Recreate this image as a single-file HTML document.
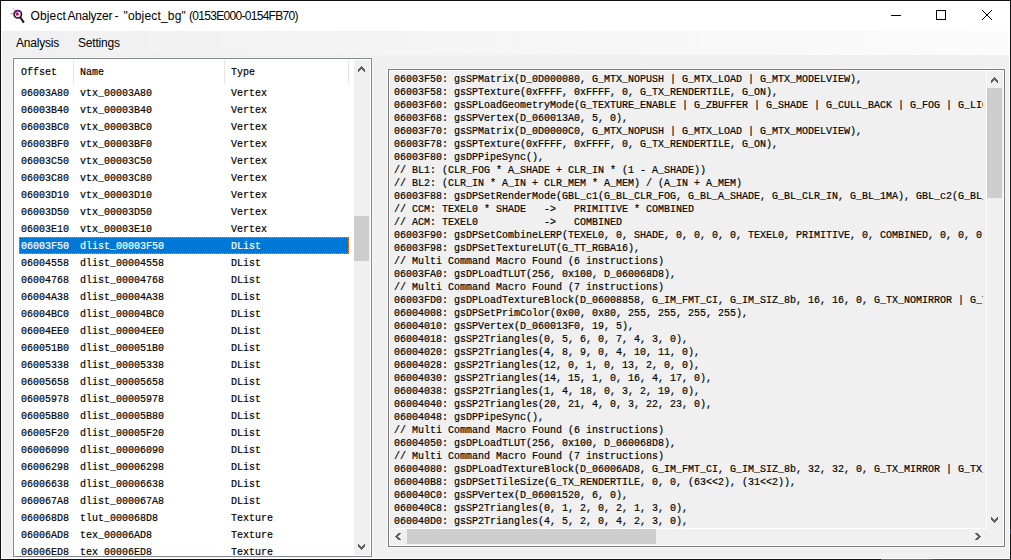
<!DOCTYPE html>
<html><head><meta charset="utf-8">
<style>
html,body{margin:0;padding:0;}
body{width:1011px;height:560px;overflow:hidden;position:relative;background:#f0f0f0;font-family:"Liberation Sans",sans-serif;}
.a{position:absolute;box-sizing:border-box;}
#frame{left:0;top:0;width:1011px;height:560px;border:1px solid #111;}
#inner{left:1px;top:1px;width:1009px;height:558px;border:1px solid #fff;border-top:0;}
#title{left:1px;top:1px;width:1009px;height:30px;background:#fff;}
.tt{top:9px;font-size:12px;color:#000;white-space:nowrap;line-height:15px;}
#menu{left:2px;top:31px;width:1007px;height:24px;background:linear-gradient(to right,#f0f0f0,#fbfbfb);}
.mi{top:36px;font-size:12px;line-height:15px;color:#000;letter-spacing:-0.2px;}
/* listbox */
#lb_ring{left:12px;top:57px;width:361px;height:501px;border:1px solid #f7f7f7;}
#lb{left:13px;top:58px;width:359px;height:499px;border:1px solid #828790;background:#fff;overflow:hidden;}
.mono{font-family:"Liberation Mono",monospace;font-size:10px;-webkit-text-stroke:0.18px #000;}
.hdr{top:66px;line-height:13px;color:#000;}
.hsep{top:60px;width:1px;height:24px;background:#e5e5e5;}
.row{position:absolute;left:19px;width:330px;height:17px;}
.row span{position:absolute;top:3px;line-height:13px;white-space:nowrap;font-family:"Liberation Mono",monospace;font-size:10px;color:#000;-webkit-text-stroke:0.18px #000;}
.c1{left:2px;}.c2{left:61px;}.c3{left:212px;}
.row.sel{background:#0078d7;}
.row.sel span{color:#fff;-webkit-text-stroke:0.18px #fff;}
.fh{position:absolute;height:1px;background:repeating-linear-gradient(to right,#ff8728 0 1px,transparent 1px 2px);}
.fv{position:absolute;width:1px;background:repeating-linear-gradient(to bottom,#ff8728 0 1px,transparent 1px 2px);}
.sbt{background:#f0f0f0;}
.thumb{background:#cdcdcd;}
/* text panel */
#tp_ring{left:387px;top:68px;width:619px;height:480px;border:1px solid #f7f7f7;}
#tp{left:388px;top:69px;width:617px;height:478px;border:1px solid #7a7a7a;background:#fff;}
#tpi{left:390px;top:71px;width:613px;height:474px;background:#f0f0f0;}
#tv{left:390px;top:71px;width:593px;height:457px;overflow:hidden;}
.ln{position:absolute;left:4px;white-space:pre;font-family:"Liberation Mono",monospace;font-size:10px;line-height:13px;color:#000;-webkit-text-stroke:0.18px #000;}
</style></head><body>
<div id="frame" class="a"></div>
<div id="inner" class="a"></div>
<div id="title" class="a"></div>
<svg class="a" style="left:6px;top:4px" width="24" height="24" viewBox="0 0 24 24">
  <path d="M7.2 4.4 L8.6 6.6 M4.4 9.6 L7.2 9.6" stroke="#a8a8a8" stroke-width="1" fill="none"/>
  <circle cx="11.8" cy="10.3" r="3.7" fill="#efefef" stroke="#2a0838" stroke-width="1.6"/>
  <path d="M9.6 7.2 A3.7 3.7 0 0 1 15.2 9.2" stroke="#6a2a8a" stroke-width="1.2" fill="none"/>
  <ellipse cx="11.2" cy="10.0" rx="1.6" ry="1.8" fill="#c80a5a"/>
  <path d="M14.2 13.3 L17.9 18.6" stroke="#140814" stroke-width="1.9" fill="none"/>
</svg>
<div class="a tt" style="left:30.5px;letter-spacing:0.15px">Object</div>
<div class="a tt" style="left:67.5px;letter-spacing:-0.24px">Analyzer</div>
<div class="a tt" style="left:114.5px">-</div>
<div class="a tt" style="left:123.5px;letter-spacing:0.17px">"object_bg"</div>
<div class="a tt" style="left:189px;letter-spacing:-0.7px">(0153E000-0154FB70)</div>
<svg class="a" style="left:880px;top:0" width="130" height="31" shape-rendering="crispEdges">
  <rect x="11" y="15" width="10" height="1" fill="#000"/>
  <path d="M56 10h10v10h-10z M57 11v8h8v-8z" fill="#000" fill-rule="evenodd"/>
  <g fill="#000"><rect x="105" y="13" width="1" height="1"/><rect x="104" y="17" width="1" height="1"/><rect x="105" y="16" width="1" height="1"/><rect x="111" y="10" width="1" height="1"/><rect x="110" y="18" width="1" height="1"/><rect x="111" y="19" width="1" height="1"/><rect x="103" y="18" width="1" height="1"/><rect x="106" y="14" width="1" height="1"/><rect x="107" y="15" width="1" height="1"/><rect x="110" y="11" width="1" height="1"/><rect x="102" y="10" width="1" height="1"/><rect x="103" y="11" width="1" height="1"/><rect x="102" y="19" width="1" height="1"/><rect x="108" y="13" width="1" height="1"/><rect x="109" y="12" width="1" height="1"/><rect x="108" y="16" width="1" height="1"/><rect x="104" y="12" width="1" height="1"/><rect x="107" y="14" width="1" height="1"/><rect x="106" y="15" width="1" height="1"/><rect x="109" y="17" width="1" height="1"/></g>
</svg>
<div id="menu" class="a"></div>
<div class="a mi" style="left:16px">Analysis</div>
<div class="a mi" style="left:78px">Settings</div>

<div id="lb_ring" class="a"></div>
<div id="lb" class="a"></div>
<div class="a mono hdr" style="left:21px">Offset</div>
<div class="a mono hdr" style="left:80px">Name</div>
<div class="a mono hdr" style="left:231px">Type</div>
<div class="a hsep" style="left:73px"></div>
<div class="a hsep" style="left:224px"></div>
<div class="a hsep" style="left:348px"></div>
<div class="a" style="left:14px;top:84px;width:339px;height:471px;overflow:hidden;">
<div style="position:absolute;left:-14px;top:-84px;width:400px;height:600px;">
<div class="row" style="top:84px"><span class="c1">06003A80</span><span class="c2">vtx_00003A80</span><span class="c3">Vertex</span></div>
<div class="row" style="top:101px"><span class="c1">06003B40</span><span class="c2">vtx_00003B40</span><span class="c3">Vertex</span></div>
<div class="row" style="top:118px"><span class="c1">06003BC0</span><span class="c2">vtx_00003BC0</span><span class="c3">Vertex</span></div>
<div class="row" style="top:135px"><span class="c1">06003BF0</span><span class="c2">vtx_00003BF0</span><span class="c3">Vertex</span></div>
<div class="row" style="top:152px"><span class="c1">06003C50</span><span class="c2">vtx_00003C50</span><span class="c3">Vertex</span></div>
<div class="row" style="top:169px"><span class="c1">06003C80</span><span class="c2">vtx_00003C80</span><span class="c3">Vertex</span></div>
<div class="row" style="top:186px"><span class="c1">06003D10</span><span class="c2">vtx_00003D10</span><span class="c3">Vertex</span></div>
<div class="row" style="top:203px"><span class="c1">06003D50</span><span class="c2">vtx_00003D50</span><span class="c3">Vertex</span></div>
<div class="row" style="top:220px"><span class="c1">06003E10</span><span class="c2">vtx_00003E10</span><span class="c3">Vertex</span></div>
<div class="row sel" style="top:237px"><span class="c1">06003F50</span><span class="c2">dlist_00003F50</span><span class="c3">DList</span></div>
<div class="row" style="top:254px"><span class="c1">06004558</span><span class="c2">dlist_00004558</span><span class="c3">DList</span></div>
<div class="row" style="top:271px"><span class="c1">06004768</span><span class="c2">dlist_00004768</span><span class="c3">DList</span></div>
<div class="row" style="top:288px"><span class="c1">06004A38</span><span class="c2">dlist_00004A38</span><span class="c3">DList</span></div>
<div class="row" style="top:305px"><span class="c1">06004BC0</span><span class="c2">dlist_00004BC0</span><span class="c3">DList</span></div>
<div class="row" style="top:322px"><span class="c1">06004EE0</span><span class="c2">dlist_00004EE0</span><span class="c3">DList</span></div>
<div class="row" style="top:339px"><span class="c1">060051B0</span><span class="c2">dlist_000051B0</span><span class="c3">DList</span></div>
<div class="row" style="top:356px"><span class="c1">06005338</span><span class="c2">dlist_00005338</span><span class="c3">DList</span></div>
<div class="row" style="top:373px"><span class="c1">06005658</span><span class="c2">dlist_00005658</span><span class="c3">DList</span></div>
<div class="row" style="top:390px"><span class="c1">06005978</span><span class="c2">dlist_00005978</span><span class="c3">DList</span></div>
<div class="row" style="top:407px"><span class="c1">06005B80</span><span class="c2">dlist_00005B80</span><span class="c3">DList</span></div>
<div class="row" style="top:424px"><span class="c1">06005F20</span><span class="c2">dlist_00005F20</span><span class="c3">DList</span></div>
<div class="row" style="top:441px"><span class="c1">06006090</span><span class="c2">dlist_00006090</span><span class="c3">DList</span></div>
<div class="row" style="top:458px"><span class="c1">06006298</span><span class="c2">dlist_00006298</span><span class="c3">DList</span></div>
<div class="row" style="top:475px"><span class="c1">06006638</span><span class="c2">dlist_00006638</span><span class="c3">DList</span></div>
<div class="row" style="top:492px"><span class="c1">060067A8</span><span class="c2">dlist_000067A8</span><span class="c3">DList</span></div>
<div class="row" style="top:509px"><span class="c1">060068D8</span><span class="c2">tlut_000068D8</span><span class="c3">Texture</span></div>
<div class="row" style="top:526px"><span class="c1">06006AD8</span><span class="c2">tex_00006AD8</span><span class="c3">Texture</span></div>
<div class="row" style="top:543px"><span class="c1">06006ED8</span><span class="c2">tex_00006ED8</span><span class="c3">Texture</span></div>
</div></div>
<div class="fh" style="left:19px;top:237px;width:330px;"></div>
<div class="fh" style="left:19px;top:253px;width:330px;"></div>
<div class="fv" style="left:19px;top:237px;height:17px;"></div>
<div class="fv" style="left:348px;top:238px;height:15px;"></div>
<div class="a sbt" style="left:354px;top:60px;width:16px;height:495px;"></div>
<div class="a thumb" style="left:354px;top:216px;width:15px;height:45px;"></div>

<div id="tp_ring" class="a"></div>
<div id="tp" class="a"></div>
<div class="a" style="left:390px;top:71px;width:613px;height:474px;background:#f0f0f0;"></div>
<div id="tv" class="a">
<div class="ln" style="top:2px">06003F50: gsSPMatrix(D_0D000080, G_MTX_NOPUSH | G_MTX_LOAD | G_MTX_MODELVIEW),</div>
<div class="ln" style="top:15px">06003F58: gsSPTexture(0xFFFF, 0xFFFF, 0, G_TX_RENDERTILE, G_ON),</div>
<div class="ln" style="top:28px">06003F60: gsSPLoadGeometryMode(G_TEXTURE_ENABLE | G_ZBUFFER | G_SHADE | G_CULL_BACK | G_FOG | G_LIGHTING | G_SHADING_SMOOTH),</div>
<div class="ln" style="top:41px">06003F68: gsSPVertex(D_060013A0, 5, 0),</div>
<div class="ln" style="top:54px">06003F70: gsSPMatrix(D_0D0000C0, G_MTX_NOPUSH | G_MTX_LOAD | G_MTX_MODELVIEW),</div>
<div class="ln" style="top:67px">06003F78: gsSPTexture(0xFFFF, 0xFFFF, 0, G_TX_RENDERTILE, G_ON),</div>
<div class="ln" style="top:80px">06003F80: gsDPPipeSync(),</div>
<div class="ln" style="top:93px">// BL1: (CLR_FOG * A_SHADE + CLR_IN * (1 - A_SHADE))</div>
<div class="ln" style="top:106px">// BL2: (CLR_IN * A_IN + CLR_MEM * A_MEM) / (A_IN + A_MEM)</div>
<div class="ln" style="top:119px">06003F88: gsDPSetRenderMode(GBL_c1(G_BL_CLR_FOG, G_BL_A_SHADE, G_BL_CLR_IN, G_BL_1MA), GBL_c2(G_BL_CLR_IN, G_BL_A_IN, G_BL_CLR_MEM, G_BL_A_MEM)),</div>
<div class="ln" style="top:132px">// CCM: TEXEL0 * SHADE   -&gt;   PRIMITIVE * COMBINED</div>
<div class="ln" style="top:145px">// ACM: TEXEL0           -&gt;   COMBINED</div>
<div class="ln" style="top:158px">06003F90: gsDPSetCombineLERP(TEXEL0, 0, SHADE, 0, 0, 0, 0, TEXEL0, PRIMITIVE, 0, COMBINED, 0, 0, 0, 0, COMBINED),</div>
<div class="ln" style="top:171px">06003F98: gsDPSetTextureLUT(G_TT_RGBA16),</div>
<div class="ln" style="top:184px">// Multi Command Macro Found (6 instructions)</div>
<div class="ln" style="top:197px">06003FA0: gsDPLoadTLUT(256, 0x100, D_060068D8),</div>
<div class="ln" style="top:210px">// Multi Command Macro Found (7 instructions)</div>
<div class="ln" style="top:223px">06003FD0: gsDPLoadTextureBlock(D_06008858, G_IM_FMT_CI, G_IM_SIZ_8b, 16, 16, 0, G_TX_NOMIRROR | G_TX_WRAP, G_TX_NOMIRROR | G_TX_WRAP, 4, 4),</div>
<div class="ln" style="top:236px">06004008: gsDPSetPrimColor(0x00, 0x80, 255, 255, 255, 255),</div>
<div class="ln" style="top:249px">06004010: gsSPVertex(D_060013F0, 19, 5),</div>
<div class="ln" style="top:262px">06004018: gsSP2Triangles(0, 5, 6, 0, 7, 4, 3, 0),</div>
<div class="ln" style="top:275px">06004020: gsSP2Triangles(4, 8, 9, 0, 4, 10, 11, 0),</div>
<div class="ln" style="top:288px">06004028: gsSP2Triangles(12, 0, 1, 0, 13, 2, 0, 0),</div>
<div class="ln" style="top:301px">06004030: gsSP2Triangles(14, 15, 1, 0, 16, 4, 17, 0),</div>
<div class="ln" style="top:314px">06004038: gsSP2Triangles(1, 4, 18, 0, 3, 2, 19, 0),</div>
<div class="ln" style="top:327px">06004040: gsSP2Triangles(20, 21, 4, 0, 3, 22, 23, 0),</div>
<div class="ln" style="top:340px">06004048: gsDPPipeSync(),</div>
<div class="ln" style="top:353px">// Multi Command Macro Found (6 instructions)</div>
<div class="ln" style="top:366px">06004050: gsDPLoadTLUT(256, 0x100, D_060068D8),</div>
<div class="ln" style="top:379px">// Multi Command Macro Found (7 instructions)</div>
<div class="ln" style="top:392px">06004080: gsDPLoadTextureBlock(D_06006AD8, G_IM_FMT_CI, G_IM_SIZ_8b, 32, 32, 0, G_TX_MIRROR | G_TX_WRAP, G_TX_MIRROR | G_TX_WRAP, 5, 5),</div>
<div class="ln" style="top:405px">060040B8: gsDPSetTileSize(G_TX_RENDERTILE, 0, 0, (63&lt;&lt;2), (31&lt;&lt;2)),</div>
<div class="ln" style="top:418px">060040C0: gsSPVertex(D_06001520, 6, 0),</div>
<div class="ln" style="top:431px">060040C8: gsSP2Triangles(0, 1, 2, 0, 2, 1, 3, 0),</div>
<div class="ln" style="top:444px">060040D0: gsSP2Triangles(4, 5, 2, 0, 4, 2, 3, 0),</div>
</div>
<div class="a" style="left:986px;top:71px;width:1px;height:458px;background:#fff;"></div>
<div class="a" style="left:390px;top:528px;width:597px;height:1px;background:#fff;"></div>
<div class="a thumb" style="left:987px;top:88px;width:15px;height:110px;"></div>
<div class="a thumb" style="left:407px;top:529px;width:249px;height:15px;"></div>
<svg class="a" style="left:358px;top:66px" width="7" height="6" shape-rendering="crispEdges" fill="#606060"><rect x="3" y="0" width="1" height="1"/><rect x="2" y="1" width="1" height="1"/><rect x="3" y="1" width="1" height="1"/><rect x="4" y="1" width="1" height="1"/><rect x="1" y="2" width="1" height="1"/><rect x="2" y="2" width="1" height="1"/><rect x="3" y="2" width="1" height="1"/><rect x="4" y="2" width="1" height="1"/><rect x="5" y="2" width="1" height="1"/><rect x="0" y="3" width="1" height="1"/><rect x="1" y="3" width="1" height="1"/><rect x="2" y="3" width="1" height="1"/><rect x="4" y="3" width="1" height="1"/><rect x="5" y="3" width="1" height="1"/><rect x="6" y="3" width="1" height="1"/><rect x="0" y="4" width="1" height="1"/><rect x="1" y="4" width="1" height="1"/><rect x="5" y="4" width="1" height="1"/><rect x="6" y="4" width="1" height="1"/><rect x="0" y="5" width="1" height="1"/><rect x="6" y="5" width="1" height="1"/></svg>
<svg class="a" style="left:358px;top:544px" width="7" height="6" shape-rendering="crispEdges" fill="#606060"><rect x="3" y="5" width="1" height="1"/><rect x="2" y="4" width="1" height="1"/><rect x="3" y="4" width="1" height="1"/><rect x="4" y="4" width="1" height="1"/><rect x="1" y="3" width="1" height="1"/><rect x="2" y="3" width="1" height="1"/><rect x="3" y="3" width="1" height="1"/><rect x="4" y="3" width="1" height="1"/><rect x="5" y="3" width="1" height="1"/><rect x="0" y="2" width="1" height="1"/><rect x="1" y="2" width="1" height="1"/><rect x="2" y="2" width="1" height="1"/><rect x="4" y="2" width="1" height="1"/><rect x="5" y="2" width="1" height="1"/><rect x="6" y="2" width="1" height="1"/><rect x="0" y="1" width="1" height="1"/><rect x="1" y="1" width="1" height="1"/><rect x="5" y="1" width="1" height="1"/><rect x="6" y="1" width="1" height="1"/><rect x="0" y="0" width="1" height="1"/><rect x="6" y="0" width="1" height="1"/></svg>
<svg class="a" style="left:991px;top:77px" width="7" height="6" shape-rendering="crispEdges" fill="#606060"><rect x="3" y="0" width="1" height="1"/><rect x="2" y="1" width="1" height="1"/><rect x="3" y="1" width="1" height="1"/><rect x="4" y="1" width="1" height="1"/><rect x="1" y="2" width="1" height="1"/><rect x="2" y="2" width="1" height="1"/><rect x="3" y="2" width="1" height="1"/><rect x="4" y="2" width="1" height="1"/><rect x="5" y="2" width="1" height="1"/><rect x="0" y="3" width="1" height="1"/><rect x="1" y="3" width="1" height="1"/><rect x="2" y="3" width="1" height="1"/><rect x="4" y="3" width="1" height="1"/><rect x="5" y="3" width="1" height="1"/><rect x="6" y="3" width="1" height="1"/><rect x="0" y="4" width="1" height="1"/><rect x="1" y="4" width="1" height="1"/><rect x="5" y="4" width="1" height="1"/><rect x="6" y="4" width="1" height="1"/><rect x="0" y="5" width="1" height="1"/><rect x="6" y="5" width="1" height="1"/></svg>
<svg class="a" style="left:991px;top:517px" width="7" height="6" shape-rendering="crispEdges" fill="#606060"><rect x="3" y="5" width="1" height="1"/><rect x="2" y="4" width="1" height="1"/><rect x="3" y="4" width="1" height="1"/><rect x="4" y="4" width="1" height="1"/><rect x="1" y="3" width="1" height="1"/><rect x="2" y="3" width="1" height="1"/><rect x="3" y="3" width="1" height="1"/><rect x="4" y="3" width="1" height="1"/><rect x="5" y="3" width="1" height="1"/><rect x="0" y="2" width="1" height="1"/><rect x="1" y="2" width="1" height="1"/><rect x="2" y="2" width="1" height="1"/><rect x="4" y="2" width="1" height="1"/><rect x="5" y="2" width="1" height="1"/><rect x="6" y="2" width="1" height="1"/><rect x="0" y="1" width="1" height="1"/><rect x="1" y="1" width="1" height="1"/><rect x="5" y="1" width="1" height="1"/><rect x="6" y="1" width="1" height="1"/><rect x="0" y="0" width="1" height="1"/><rect x="6" y="0" width="1" height="1"/></svg>
<svg class="a" style="left:395px;top:533px" width="6" height="7" shape-rendering="crispEdges" fill="#606060"><rect x="0" y="3" width="1" height="1"/><rect x="1" y="2" width="1" height="1"/><rect x="1" y="3" width="1" height="1"/><rect x="1" y="4" width="1" height="1"/><rect x="2" y="1" width="1" height="1"/><rect x="2" y="2" width="1" height="1"/><rect x="2" y="3" width="1" height="1"/><rect x="2" y="4" width="1" height="1"/><rect x="2" y="5" width="1" height="1"/><rect x="3" y="0" width="1" height="1"/><rect x="3" y="1" width="1" height="1"/><rect x="3" y="2" width="1" height="1"/><rect x="3" y="4" width="1" height="1"/><rect x="3" y="5" width="1" height="1"/><rect x="3" y="6" width="1" height="1"/><rect x="4" y="0" width="1" height="1"/><rect x="4" y="1" width="1" height="1"/><rect x="4" y="5" width="1" height="1"/><rect x="4" y="6" width="1" height="1"/><rect x="5" y="0" width="1" height="1"/><rect x="5" y="6" width="1" height="1"/></svg>
<svg class="a" style="left:975px;top:533px" width="6" height="7" shape-rendering="crispEdges" fill="#606060"><rect x="5" y="3" width="1" height="1"/><rect x="4" y="2" width="1" height="1"/><rect x="4" y="3" width="1" height="1"/><rect x="4" y="4" width="1" height="1"/><rect x="3" y="1" width="1" height="1"/><rect x="3" y="2" width="1" height="1"/><rect x="3" y="3" width="1" height="1"/><rect x="3" y="4" width="1" height="1"/><rect x="3" y="5" width="1" height="1"/><rect x="2" y="0" width="1" height="1"/><rect x="2" y="1" width="1" height="1"/><rect x="2" y="2" width="1" height="1"/><rect x="2" y="4" width="1" height="1"/><rect x="2" y="5" width="1" height="1"/><rect x="2" y="6" width="1" height="1"/><rect x="1" y="0" width="1" height="1"/><rect x="1" y="1" width="1" height="1"/><rect x="1" y="5" width="1" height="1"/><rect x="1" y="6" width="1" height="1"/><rect x="0" y="0" width="1" height="1"/><rect x="0" y="6" width="1" height="1"/></svg>
<div class="a" style="left:881px;top:559px;width:130px;height:1px;background:linear-gradient(to right,#6a6a6a 0,#6a6a6a 35%,#404040 45%,#4a4a4a 100%);"></div>
<div class="a" style="left:1010px;top:529px;width:1px;height:5px;background:#1a3a6a;"></div>
</body></html>
